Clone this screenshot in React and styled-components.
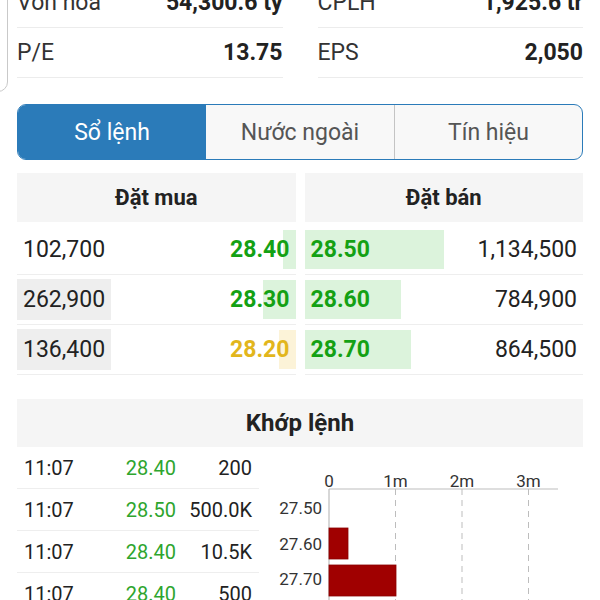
import styled, { createGlobalStyle } from "styled-components";

const GlobalStyle = createGlobalStyle`
  html, body {
    margin: 0;
    padding: 0;
    background: #fff;
    font-family: Roboto, "Noto Sans", "Liberation Sans", sans-serif;
    color: #222;
    overflow: hidden;
  }
  * { box-sizing: border-box; }
`

const Page = styled.div`
  position: relative;
  width: 600px;
  height: 600px;
  padding: 0 17px;
  overflow: hidden;
`
const CardEdge = styled.div`
  position: absolute;
  left: -30px;
  top: -20px;
  width: 38px;
  height: 112px;
  border: 1px solid #c9c9c9;
  border-radius: 10px;
`
const StatsGrid = styled.div`
  display: grid;
  grid-template-columns: 1fr 1fr;
  column-gap: 35px;
  margin-top: -22px;
`
const StatCell = styled.div`
  display: flex;
  justify-content: space-between;
  align-items: center;
  height: 50px;
  border-bottom: 1px solid #ececec;
  font-size: 23px;
`
const StatLabel = styled.span`
  color: #333;
`
const StatValue = styled.span`
  font-weight: 700;
  color: #222;
`
const Tabs = styled.div`
  display: grid;
  grid-template-columns: repeat(3, 1fr);
  height: 56px;
  margin-top: 26px;
  border: 1.5px solid #2b7bb9;
  border-radius: 9px;
  overflow: hidden;
  background: #f8f8f8;
`
const Tab = styled.div`
  display: flex;
  align-items: center;
  justify-content: center;
  font-size: 23px;
  color: ${props => props.$active ? "#fff" : "#555"};
  background: ${props => props.$active ? "#2b7bb9" : "transparent"};
  border-left: ${props => props.$divider ? "1px solid #c4c4c4" : "none"};
`
const Book = styled.div`
  display: grid;
  grid-template-columns: 1fr 1fr;
  column-gap: 9px;
  margin-top: 13px;
`
const Side = styled.div``
const SectionHead = styled.div`
  display: flex;
  align-items: center;
  justify-content: center;
  height: ${props => props.$h || 49}px;
  background: #f5f5f5;
  font-weight: 700;
  font-size: ${props => props.$size || 22}px;
  color: #222;
  margin-bottom: ${props => props.$mb || 0}px;
`
const BookRow = styled.div`
  padding: 4px 0;
  border-bottom: 1px solid #eeeeee;
  height: 50px;
`
const RowInner = styled.div`
  position: relative;
  display: flex;
  justify-content: space-between;
  align-items: center;
  height: 41px;
  font-size: 23px;
`
const Bar = styled.div`
  position: absolute;
  top: 1px;
  bottom: 1px;
  ${props => props.$side}: 0;
  background: ${props => props.$yellow ? "#fcf3d8" : "#dcf3dc"};
`
const Qty = styled.span`
  position: relative;
  display: flex;
  align-items: center;
  height: 100%;
  padding: 0 6px;
  color: #222;
  background: ${props => props.$hl ? "#eeeeee" : "transparent"};
  width: ${props => props.$hl ? "94px" : "auto"};
`
const Price = styled.span`
  position: relative;
  padding: 0 6px;
  font-weight: 700;
  color: ${props => props.$yellow ? "#e2b61c" : "#14a114"};
`
const Match = styled.div`
  margin-top: 24px;
`
const MatchBody = styled.div`
  display: flex;
`
const TradeList = styled.div`
  width: 242px;
`
const TradeRow = styled.div`
  display: flex;
  align-items: center;
  height: 42px;
  padding: 0 7px;
  border-bottom: 1px solid #eeeeee;
  font-size: 20px;
  color: #222;
`
const Time = styled.span`
  flex: 1;
`
const TradePrice = styled.span`
  width: 80px;
  text-align: right;
  color: #2ea52e;
`
const Vol = styled.span`
  width: 76px;
  text-align: right;
`
const Chart = styled.svg`
  display: block;
  flex: 1;
  font-family: Roboto, "Liberation Sans", sans-serif;
`

const buys = [
  { qty: "102,700", price: "28.40", bar: 13 },
  { qty: "262,900", price: "28.30", bar: 33, hl: true },
  { qty: "136,400", price: "28.20", bar: 17, hl: true, yellow: true },
]
const sells = [
  { qty: "1,134,500", price: "28.50", bar: 139 },
  { qty: "784,900", price: "28.60", bar: 96 },
  { qty: "864,500", price: "28.70", bar: 106 },
]
const trades = [
  ["11:07", "28.40", "200"],
  ["11:07", "28.50", "500.0K"],
  ["11:07", "28.40", "10.5K"],
  ["11:07", "28.40", "500"],
]

const X0 = 70
const UNIT = 66.5
const AXIS_Y = 42

const VolumeChart = () => (
  <Chart width="324" height="160" viewBox="0 0 324 160">
    {["0", "1m", "2m", "3m"].map((t, i) => (
      <text key={t} x={X0 + i * UNIT} y="40" fontSize="17" fill="#333" textAnchor="middle">{t}</text>
    ))}
    {[1, 2, 3].map(i => (
      <line key={i} x1={X0 + i * UNIT} y1={AXIS_Y} x2={X0 + i * UNIT} y2="160" stroke="#bdbdbd" strokeWidth="1" strokeDasharray="6 5" />
    ))}
    <line x1={X0} y1={AXIS_Y} x2="299" y2={AXIS_Y} stroke="#bdbdbd" strokeWidth="1.2" />
    <line x1={X0} y1={AXIS_Y} x2={X0} y2="160" stroke="#bdbdbd" strokeWidth="1.2" />
    {[["27.50", 67], ["27.60", 103], ["27.70", 138]].map(([l, y]) => (
      <text key={l} x="63" y={y} fontSize="17" fill="#333" textAnchor="end">{l}</text>
    ))}
    <rect x={X0} y="81" width="19" height="31" fill="#a00000" stroke="#8a0000" strokeWidth="0.8" />
    <rect x={X0} y="118" width="67" height="31" fill="#a00000" stroke="#8a0000" strokeWidth="0.8" />
  </Chart>
)

const App = () => {
  return (
    <>
      <GlobalStyle />
      <Page>
        <CardEdge />
        <StatsGrid>
          <StatCell><StatLabel>Vốn hoá</StatLabel><StatValue>54,300.6 tỷ</StatValue></StatCell>
          <StatCell><StatLabel>CPLH</StatLabel><StatValue>1,925.6 tr</StatValue></StatCell>
          <StatCell><StatLabel>P/E</StatLabel><StatValue>13.75</StatValue></StatCell>
          <StatCell><StatLabel>EPS</StatLabel><StatValue>2,050</StatValue></StatCell>
        </StatsGrid>

        <Tabs>
          <Tab $active>Sổ lệnh</Tab>
          <Tab>Nước ngoài</Tab>
          <Tab $divider>Tín hiệu</Tab>
        </Tabs>

        <Book>
          <Side>
            <SectionHead $mb={3}>Đặt mua</SectionHead>
            {buys.map(b => (
              <BookRow key={b.price}>
                <RowInner>
                  <Bar $side="right" $yellow={b.yellow} style={{ width: b.bar }} />
                  <Qty $hl={b.hl}>{b.qty}</Qty>
                  <Price $yellow={b.yellow}>{b.price}</Price>
                </RowInner>
              </BookRow>
            ))}
          </Side>
          <Side>
            <SectionHead $mb={3}>Đặt bán</SectionHead>
            {sells.map(s => (
              <BookRow key={s.price}>
                <RowInner>
                  <Bar $side="left" style={{ width: s.bar }} />
                  <Price>{s.price}</Price>
                  <Qty>{s.qty}</Qty>
                </RowInner>
              </BookRow>
            ))}
          </Side>
        </Book>

        <Match>
          <SectionHead $h={48} $size={24}>Khớp lệnh</SectionHead>
          <MatchBody>
            <TradeList>
              {trades.map((t, i) => (
                <TradeRow key={i}>
                  <Time>{t[0]}</Time>
                  <TradePrice>{t[1]}</TradePrice>
                  <Vol>{t[2]}</Vol>
                </TradeRow>
              ))}
            </TradeList>
            <VolumeChart />
          </MatchBody>
        </Match>
      </Page>
    </>
  )
}

export default App;
